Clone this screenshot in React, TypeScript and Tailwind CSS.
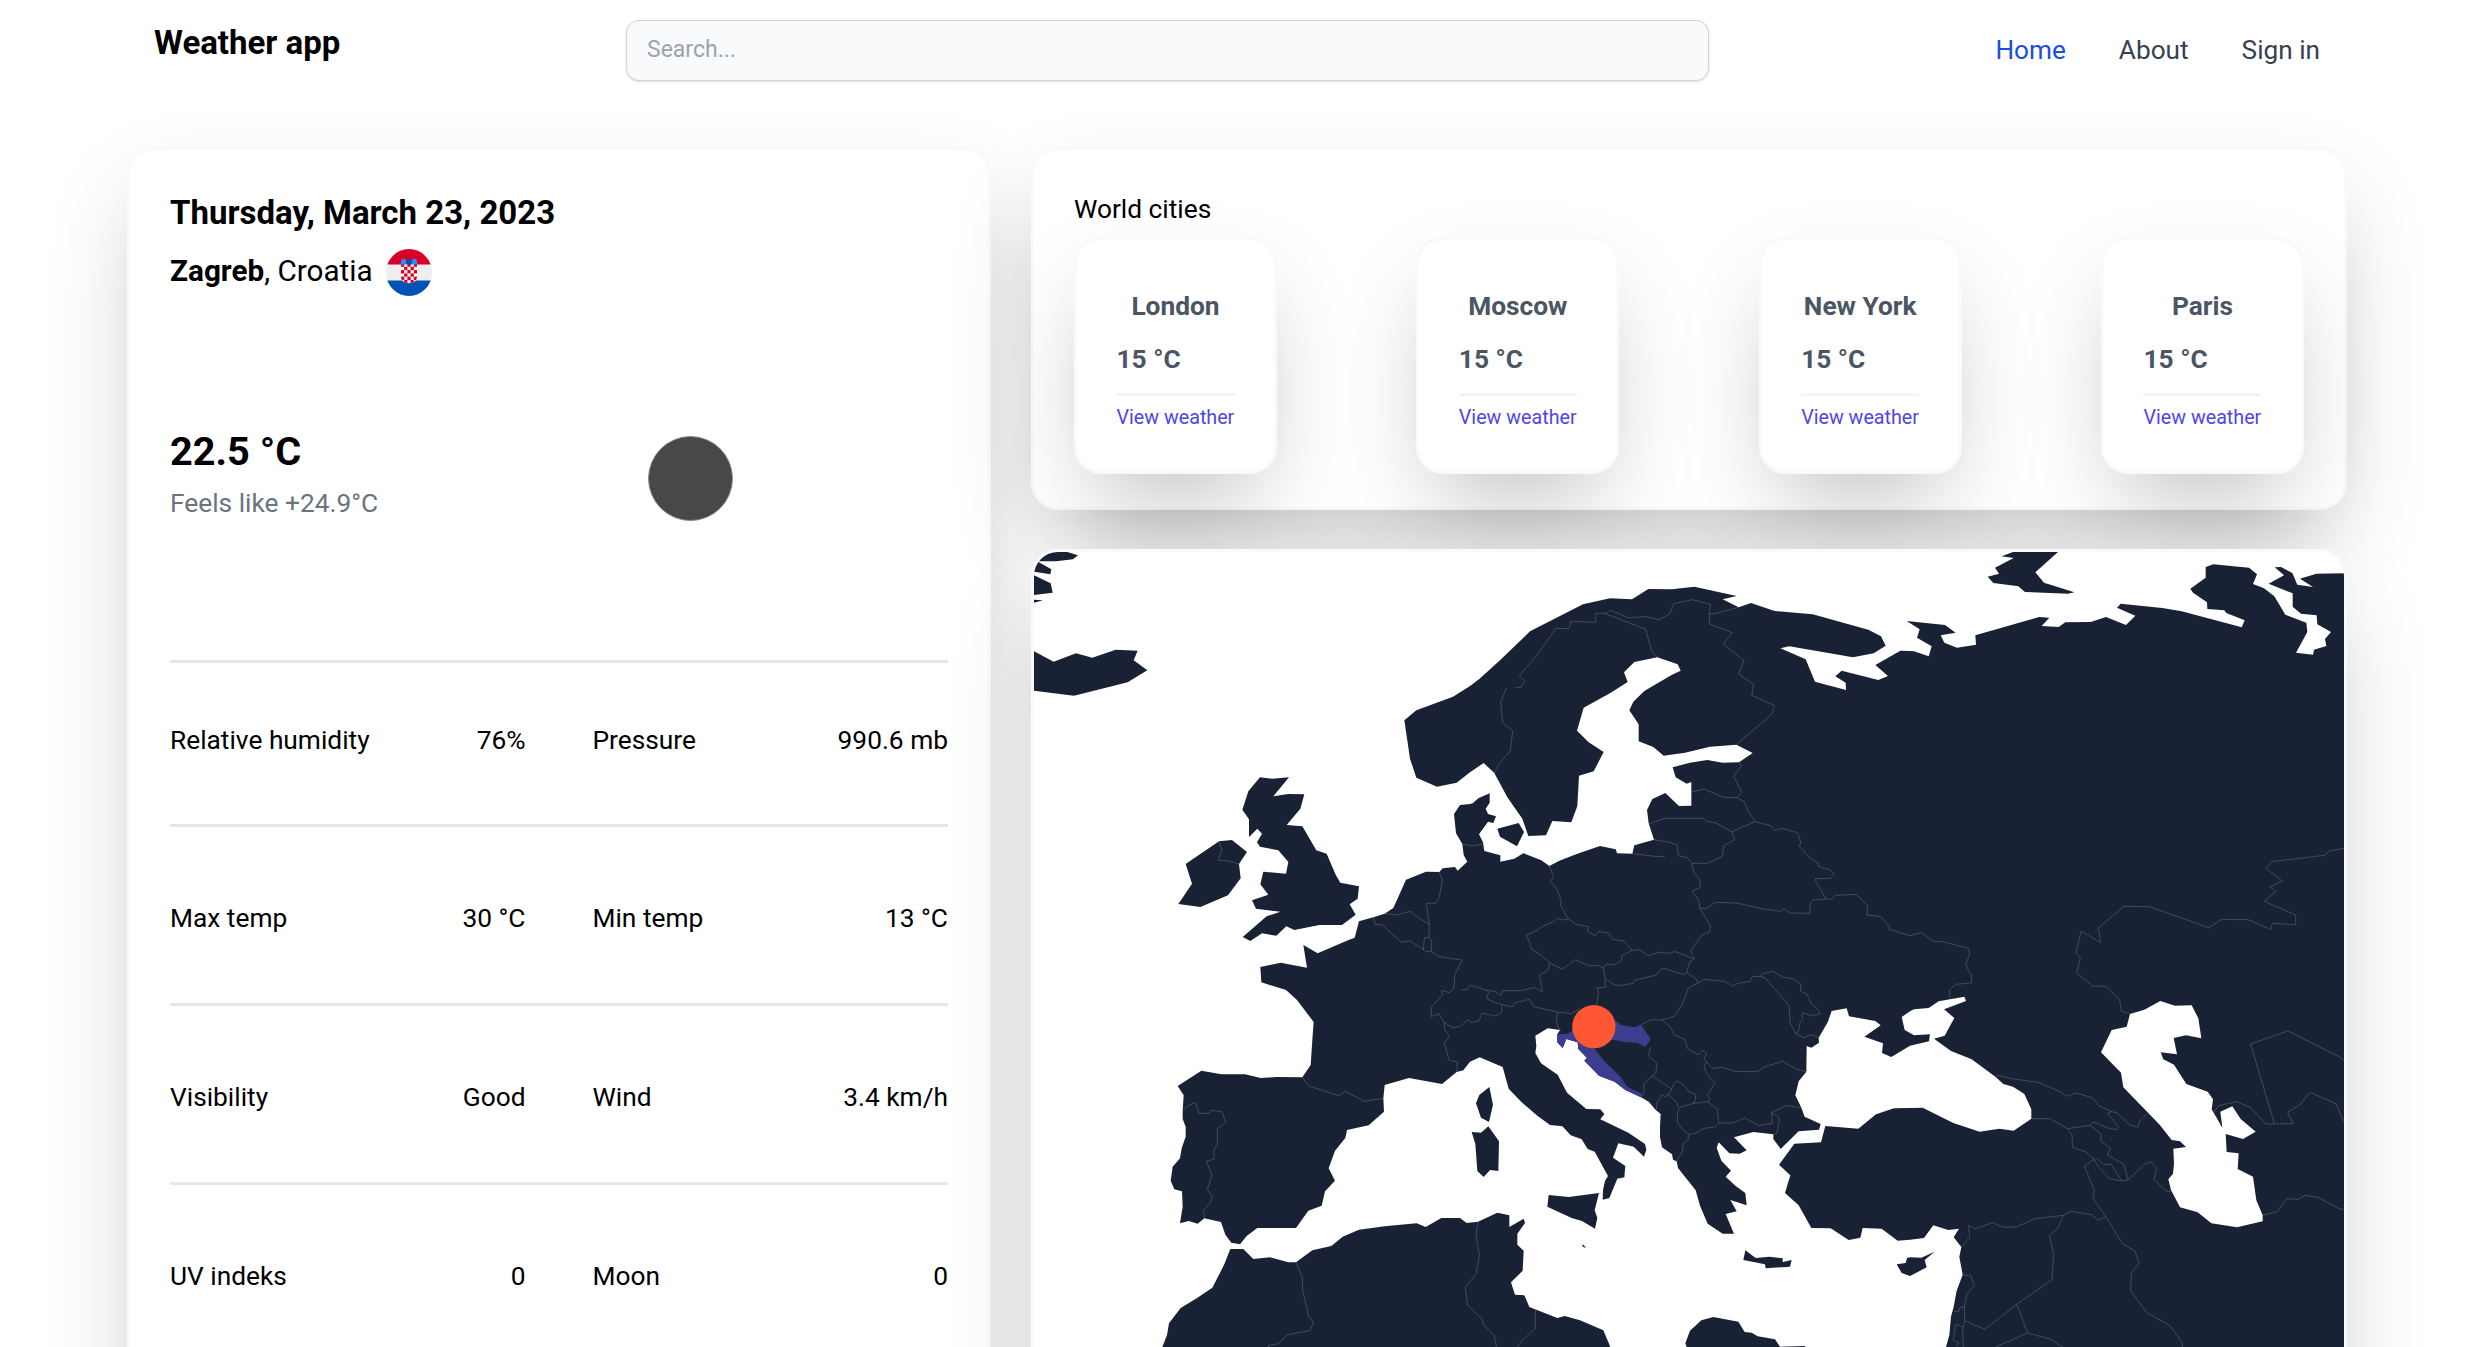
import React from "react";

/* ---------- map geometry ---------- */

// The map is stored as six sheets; each sheet has its own local origin.
const sheet = (dx: number, dy: number) => (points: string) =>
  points
    .trim()
    .split(/\s+/)
    .map((pair) => {
      const [x, y] = pair.split(",").map(Number);
      return `${x + dx},${y + dy}`;
    })
    .join(" ");

const A = sheet(0, 0);
const B = sheet(1320, 0);
const C = sheet(2640, 0);
const D = sheet(0, 1200);
const E = sheet(1320, 1200);
const F = sheet(2640, 1200);
const join = (...parts: string[]) => parts.join(" ");

const eurasia = join(
  D("630,913 604,908 586,884 573,846 523,835 503,851 476,843 450,850 458,800 456,754 433,748 422,722 428,680 450,655 455,625 467,590 467,560 458,537 458,512 461,466 443,438 514,392 574,403 645,403 692,414 738,411 817,412 842,375 847,300 851,246 801,180 768,150 694,127 691,81 752,68 831,83 820,15 863,40 954,1"),
  A("974,1193 987,1144 1030,1132 1064,1121 1090,1104 1128,1019 1188,995 1228,996 1238,985 1275,981 1283,992 1312,965 1301,945 1297,912 1278,880 1272,822 1290,795 1320,792"),
  B("8,790 25,775 59,760 59,788 47,806 54,822 78,829 70,849 54,845 27,883 39,907 43,933 91,946 91,965 133,956 160,940 214,961 238,978 268,962 320,942 390,918 437,928 441,940 487,941 493,916 552,899 536,850 531,810 547,777 586,759 627,798 664,797 664,726 650,731 617,712 608,682 660,668 712,660 758,668 807,667 848,639 799,614 720,620 645,638 581,647 550,621 506,604 506,553 478,511 490,485 523,453 606,404 632,392 623,373 562,352 493,366 462,397 473,426 421,459 341,503 321,572 356,607 401,636 371,694 327,707 322,798 304,847 247,843 228,886 175,888 157,836 112,772 73,699 41,669 0,697"),
  A("1280,728 1221,740 1159,713 1140,656 1123,541 1159,511 1269,470 1320,438"),
  B("27,418 90,361 180,274 339,193 420,175 486,178 535,147 606,148 673,140 800,168 758,178 806,202 843,189 914,213 1028,223 1195,269 1233,289 1247,317 1211,340 1149,352 958,319 931,325 1007,358 1035,425 1128,450 1127,428 1096,409 1115,392 1225,420 1254,408 1216,375 1291,332 1320,333"),
  C("12,334 56,349 65,319 21,293 29,268 -10,243 105,255 137,278 92,286 103,308 141,323 198,314 196,286 388,231 418,233 395,258 446,261 466,247 542,246 588,231 648,255 676,227 621,203 632,191 757,204 815,214 995,262 1004,241 949,219 943,211 892,207 891,187 849,158 841,146 887,113 887,81 910,73 1017,83 1041,103 1029,132 1062,145 1093,169 1126,224 1189,248 1192,276 1158,338 1209,344 1212,329 1249,318 1245,297 1263,276 1222,253 1220,226 1173,221 1148,200 1148,160 1076,131 1122,106 1094,82 1113,81 1147,99 1162,134 1209,141 1170,116 1219,101 1330,99"),
  F("1330,1300 95,1300 108,1221 118,1185 123,1130 131,1100 140,1052 158,1004 148,951 154,921 131,892 147,866 115,870 70,856 42,894 0,899"),
  E("1283,902 1235,866 1178,864 1171,893 1136,900 1082,865 1024,864 986,796 945,759 961,706 927,674 973,611 1053,607 1066,558 1165,566 1218,523 1272,505 1320,504"),
  F("38,503 130,549 209,575 268,566 311,572 364,536 364,508 343,462 309,440 280,432 256,410 185,358 123,333 72,296 104,287 133,234 102,208 168,183 163,170 86,184 56,204 12,208 0,214"),
  E("1295,231 1304,270 1320,279"),
  F("12,286 60,283 57,304 0,317"),
  E("1264,351 1236,339 1239,310 1183,290 1232,256 1216,243 1137,229 1130,205 1085,213 1073,247 1046,293 1047,308 1024,323 1010,318 1009,395 986,424 976,466 994,503 1004,530 1052,552 1047,569 986,574 932,627 910,597 910,583 850,576 792,592 830,631 809,641 778,640 746,607 740,623 754,662 783,692 767,710 797,738 826,759 830,796 781,780 800,814 767,822 792,881 758,881 713,851 690,797 677,751 624,684 620,664 609,659 606,643 576,622 570,590 570,560 572,522 555,508 537,486 516,473 466,450 434,425 387,407 343,362 351,354 325,327 323,307 289,297 278,324 262,307 262,283 270,270 233,265 196,287 199,318 196,339 213,370 263,404 291,458 349,507 391,508 403,522 391,538 475,578 525,612 529,629 522,650 491,620 445,610 429,653 466,678 463,712 442,716 418,774 398,779 399,750 405,723 414,708 374,635 353,627 335,598 302,586 277,559 240,555 202,527 155,487 116,446 98,381 29,352 0,365"),
  D("1300,391 1280,396 1236,432 1137,414 1064,435 1060,475 1062,515 1016,556 951,570 946,594 915,632 896,685 915,722 885,754 875,797 835,812 798,864 682,864 650,888"),
);

const africa = join(
  D("375,1300 397,1221 411,1185 417,1150 452,1104 500,1075 547,1043 582,975 601,927 640,927 670,957 720,952 775,967 798,967 847,931 904,918 938,890 987,869 1064,859 1160,850 1187,861 1234,834 1290,834 1310,849"),
  E("24,845 82,818 118,826 118,861 161,836 165,849 142,881 142,914 161,932 158,992 123,1027 135,1064 163,1066 178,1101 262,1134 284,1128 330,1141 400,1171 421,1221 440,1300"),
);

const land = [
  eurasia,
  africa,
  E("680,1300 650,1221 646,1210 660,1172 694,1141 730,1131 805,1145 824,1176 845,1178 863,1189 915,1198 930,1220 1005,1218 1010,1300"),
  // Iceland and Greenland
  A("0,328 12,334 71,365 138,340 187,353 257,329 323,332 311,361 352,391 293,427 132,467 12,452 0,451"),
  A("10,64 10,20 60,30 112,36 144,46 129,58 78,64"),
  A("27,67 64,88 61,103 12,95 0,93 0,60"),
  A("0,100 12,106 62,130 68,158 12,165 0,166"),
  A("0,179 39,181 0,191"),
  // Great Britain, Ireland, Zealand
  A("690,712 727,716 777,712 730,769 775,762 823,763 811,806 770,855 817,859 859,931 890,941 917,1004 931,1028 987,1039 983,1076 959,1093 977,1124 936,1155 868,1155 793,1170 769,1159 739,1187 696,1180 661,1203 638,1191 710,1129 751,1115 678,1106 666,1081 715,1064 691,1033 700,995 768,1001 775,966 745,931 690,920 681,907 696,881 682,866 657,891 657,838 637,809 655,754"),
  A("567,904 606,900 651,936 627,972 632,1015 594,1066 511,1101 445,1092 486,1031 467,972"),
  B("82,866 146,849 162,876 141,919 90,890"),
  // Mediterranean islands
  E("58,441 69,494 57,546 33,533 18,490 28,465"),
  E("5,576 33,578 55,559 87,604 85,693 60,690 41,711 22,693 16,612"),
  E("236,765 296,771 387,759 374,811 382,834 375,866 336,843 305,834 232,800"),
  E("337,912 349,923 338,920"),
  E("826,931 857,954 898,950 938,955 938,966 965,960 960,980 887,985 885,973 820,960"),
  join(E("1311,954 1307,969 1280,973 1295,999 1320,1008"), F("50,982 44,960 74,935 34,953 0,952")),
  // Novaya Zemlya
  C("309,36 275,49 311,54 255,83 267,101 233,110 250,129 325,139 345,156 475,161 493,157 402,128 376,97 444,36"),
];

const caspian = F(
  "751,183 795,197 845,196 865,235 874,295 828,286 791,294 801,343 752,337 760,358 792,374 829,432 893,455 909,478 905,508 937,563 931,515 967,499 992,537 1037,575 999,597 947,582 950,636 986,640 983,687 1029,710 1039,781 1058,826 1058,844 981,862 904,850 863,817 810,802 783,750 775,718 789,701 792,670 790,626 828,621 810,604 785,600 749,554 640,442 633,398 573,337 605,270 650,260 660,222 703,209",
);

const croatia = E(
  "430,232 437,242 453,255 494,262 513,254 542,297 527,320 501,308 468,307 428,299 360,310 371,324 402,362 452,412 472,440 517,463 516,473 466,450 434,425 387,407 343,362 351,354 325,327 323,307 289,297 278,324 262,307 262,283 290,282 308,272 340,240",
);

const borders = [
  // Western Europe
  A("567,904 575,930 565,961 594,962 627,972"),
  join(A("1297,912 1320,917"), B("12,917 39,912")),
  A("1228,996 1237,1019 1228,1071 1217,1090 1189,1090 1198,1152 1197,1192"),
  A("1064,1121 1101,1125 1140,1114 1172,1138 1198,1152"),
  A("1030,1132 1036,1154 1056,1154 1115,1207 1139,1202 1190,1235"),
  A("1180,1230 1183,1194 1197,1192 1205,1205 1204,1234"),
  D("1190,35 1204,34 1226,50 1297,60 1275,103 1271,146 1258,158 1234,151 1237,165 1204,201 1204,230 1226,221 1243,248 1268,263 1290,260 1316,238"),
  D("1243,248 1244,268 1258,291 1243,309 1257,360 1282,366 1280,396"),
  join(D("1293,149 1311,149 1320,135"), E("50,151")),
  join(D("1316,238"), E("0,247 26,244 36,220 76,228 95,218 95,194")),
  D("817,412 836,438 927,467 946,454 1003,484 1060,475"),
  D("458,512 475,496 496,488 507,520 537,520 545,511 576,515 587,547 562,567 562,615 553,626 551,658 529,664 546,705 532,749 548,770 539,790 521,811 523,835"),
  // North Africa
  D("798,967 817,1013 818,1050 836,1130 851,1146 839,1172 772,1184 745,1211 716,1216 714,1225"),
  join(E("24,845 18,885 28,945 19,1001 0,1025"), D("1306,1043 1312,1094 1320,1103"), E("37,1137 39,1153 73,1186 80,1225")),
  E("196,1110 196,1165 158,1200 138,1225"),
  // Nordics and Baltics
  B("73,699 88,670 121,633 128,574 98,548 92,485 110,444"),
  B("136,442 153,442 164,424 148,407 200,347 257,266 297,265 303,244 377,247 377,220 404,220 423,211 473,233 527,230 568,239 600,221 611,191 668,179 722,193 717,221 735,221 806,202"),
  B("404,220 527,268 545,333 562,352"),
  B("717,221 719,252 786,278 760,312 822,361 806,402 851,433 845,466 914,497 905,523 799,614"),
  B("807,667 815,677 791,708 815,757 800,773 823,785 836,816 855,845"),
  B("664,756 703,747 760,772 800,773"),
  B("536,852 582,835 701,835 711,845 735,848 786,875 855,845 904,858 913,871 934,865 982,878 992,906 988,919 1024,957 1045,969 1047,980 1079,989 1093,1003 1082,1015 1037,1016 1036,1022 1068,1077"),
  B("786,875 794,899 761,917 757,949 712,970 665,970 652,953 625,947 622,916 603,908 552,899"),
  B("487,941 555,949 585,950"),
  // Central and Eastern Europe
  join(B("665,970 671,997 689,1018 691,1042 667,1053 685,1079 690,1105 722,1160 718,1176 697,1184 684,1200"), E("662,34 674,56 659,65 650,97")),
  join(
    B("690,1105 710,1105 735,1087 800,1089 870,1105 930,1114 943,1106 959,1119 1020,1120 1020,1092 1030,1080 1068,1077 1085,1078 1097,1066 1159,1063 1193,1098 1191,1125 1232,1130 1257,1159 1257,1168 1320,1187"),
    C("35,1178 69,1204 98,1205 175,1225"),
    F("179,42 167,75 185,108 184,129 137,133 118,151 120,177"),
  ),
  B("238,978 251,1009 241,1025 260,1047 273,1079 272,1096 295,1137 318,1153 355,1160 352,1174 376,1187 386,1174 417,1180 428,1198 461,1203 487,1231"),
  B("295,1137 274,1140 262,1135 248,1147 217,1159 201,1171 169,1186 178,1205 185,1228 212,1245 240,1269"),
  E("240,69 277,88 316,59 357,77 385,76 401,85 405,115 429,132 448,137 490,130 493,121 560,105 572,88 582,85 640,104 650,97 680,118 683,130"),
  E("240,69 233,91 209,106 217,155 194,143 150,152 97,152 92,166 75,154 50,151 57,157 49,175 67,184 95,194 129,200 133,189 178,178 191,200 262,216 305,221 330,205"),
  E("401,85 407,73 437,73 455,60 456,46 487,31 508,29 535,47 566,37 603,40 613,34 670,56"),
  E("405,115 407,142 380,143 386,156 380,195"),
  E("683,130 656,143 638,190 614,228 577,240 545,239 513,254"),
  E("683,130 702,118 765,124 788,139 804,130 841,124 847,110 870,109 885,113 957,196 961,250 977,280 1000,293 1024,284 1046,293"),
  E("870,109 876,102 908,94 940,112 971,117 992,132 992,154 1011,163 1023,189 1041,205 1051,221 1028,227 1000,219 996,227 999,238 989,250 986,273 977,280"),
  E("262,216 259,250 272,274"),
  // Balkans
  E("577,240 600,260 614,285 645,298 652,325 685,345 698,331 710,340 702,357 727,385 758,382 795,394 863,395 885,380 938,364 979,388 1009,395"),
  E("710,365 702,378 709,400 735,428 713,465 720,480 713,485"),
  E("541,321 536,348 560,370 558,398 546,407 522,432 521,465"),
  E("546,407 605,447 612,430 622,423 641,436 656,454 677,463 676,478 671,490"),
  E("605,447 596,465 622,490 625,503"),
  E("560,508 560,490 577,463 583,470 596,465"),
  E("632,501 671,490 713,485 742,507 746,549 735,561 702,565 675,580 655,583 635,565 622,546 623,516 632,501"),
  E("655,583 655,598 640,610 637,635 620,664"),
  E("746,549 787,549 824,534 865,557 906,550 905,517 950,497 994,503"),
  E("905,517 929,535 921,580 910,583"),
  // Caucasus and Middle East
  F("256,410 262,406 311,417 384,427 457,458 468,469 500,459 546,473 566,497 605,515 593,521 625,560 620,569 598,565 549,546 540,556 473,566 419,536 364,536"),
  F("605,515 620,518 660,556 685,561 689,543 711,521"),
  F("540,556 574,583 572,602 602,625 592,645 642,673 654,720 635,723 598,715 565,680 553,658"),
  F("473,566 486,587 488,622 527,636 553,658 523,678 553,752 549,775 588,831 638,912 675,933 687,971 665,997 661,1052 710,1117 780,1157 817,1208 817,1225"),
  F("560,656 581,673 604,673 635,723"),
  F("654,720 705,671 723,666 740,684 732,719 767,752 783,755"),
  F("154,921 179,891 176,856 195,867 248,848 279,862 320,861 374,836 460,826 482,814 544,824 565,841 588,831"),
  F("460,826 443,866 418,886 431,940 426,1019 320,1093 225,1168 164,1142"),
  F("320,1093 353,1179 257,1221"),
  F("353,1179 420,1197 458,1221"),
  F("158,1006 182,1006 193,1037 170,1063 163,1100 164,1142 158,1170 160,1225"),
  F("131,1115 147,1114 148,1104 163,1100"),
  F("158,1161 137,1153 130,1200 146,1208 140,1218"),
  // Central Asia
  join(
    C("1310,924 1257,933 1244,946 1084,965 1069,985 1118,1024 1081,1040 1097,1055 1063,1084 1157,1125 1157,1154 1087,1150 1082,1168 1014,1139 936,1138 896,1163 718,1100 641,1099 565,1164 572,1208 513,1174 507,1200"),
    F("497,40 511,52 500,99 548,138 588,139 629,181 634,213 660,222"),
  ),
  F("909,520 926,497 980,485 1021,502 1068,552 1150,551 1133,517 1169,495 1200,457 1278,491 1302,547"),
  F("1093,551 1022,312 1134,273 1287,350 1310,366"),
  F("1058,826 1102,815 1130,776 1164,778 1185,766 1224,772 1287,806 1310,810"),
];

function EuropeMap() {
  return (
    <svg className="block h-[900px] w-[1310px]" viewBox="12 36 3930 2700" aria-label="Map of Europe">
      <g fill="#192135">
        {land.map((points, i) => (
          <polygon key={i} points={points} />
        ))}
      </g>
      <polygon points={caspian} fill="#ffffff" />
      <g fill="none" stroke="#8f95a3" strokeOpacity="0.7" strokeWidth="1.5">
        {borders.map((points, i) => (
          <polyline key={i} points={points} />
        ))}
      </g>
      <polygon points={croatia} fill="#3c3d8f" />
      <circle cx={1691.5} cy={1460} r={65} fill="#ff5733" />
    </svg>
  );
}

function CroatiaFlag() {
  const cells: React.ReactNode[] = [];
  for (let r = 0; r < 6; r++) {
    for (let c = 0; c < 5; c++) {
      if ((r + c) % 2 === 0) {
        cells.push(<rect key={`${r}-${c}`} x={c * 3.2} y={r * 3.3} width={3.2} height={3.3} fill="#d80027" />);
      }
    }
  }
  return (
    <svg className="h-[47px] w-[46px]" viewBox="0 0 46 47" aria-label="Croatia">
      <defs>
        <clipPath id="flag-disc">
          <ellipse cx="23" cy="23.5" rx="23" ry="23.5" />
        </clipPath>
        <clipPath id="flag-shield">
          <path d="M0 0H16V13C16 17.500 12 20 8 20S0 17.500 0 13Z" />
        </clipPath>
      </defs>
      <g clipPath="url(#flag-disc)">
        <rect width="46" height="47" fill="#eeeeee" />
        <rect width="46" height="15.500" fill="#d80027" />
        <rect y="31.500" width="46" height="15.500" fill="#0052b4" />
        <g transform="translate(15 14.500)">
          <g clipPath="url(#flag-shield)">
            <rect width="16" height="20" fill="#f5f5f5" />
            {cells}
          </g>
        </g>
        <path d="M15 15.500V11L17.700 9.500L20.300 11V15.500Z" fill="#338af3" />
        <path d="M25.700 15.500V11L28.300 9.500L31 11V15.500Z" fill="#338af3" />
        <path d="M20.300 15.500V11L23 9.500L25.700 11V15.500Z" fill="#0052b4" />
      </g>
    </svg>
  );
}

/* ---------- page pieces ---------- */

function Header() {
  return (
    <header className="flex h-[147px] items-start pl-[154px] pr-[159px]">
      <h1 className="mt-[20px] w-[472px] text-[33px] leading-[46px] font-bold">Weather app</h1>
      <input
        className="mt-[20px] h-[61px] w-[1083px] rounded-[13px] border border-[#d1d5db] bg-[#f9fafb] px-5 pb-[2px] text-[23px] shadow-sm placeholder:text-[#9ca3af]"
        placeholder="Search..."
      />
      <nav className="mt-[30px] ml-auto flex gap-[53px] text-[26.2px] leading-[40px] text-[#374151]">
        <a className="text-[#1d4ed8]">Home</a>
        <a>About</a>
        <a>Sign in</a>
      </nav>
    </header>
  );
}

const stats = [
  [["Relative humidity", "76%"], ["Pressure", "990.6 mb"]],
  [["Max temp", "30 °C"], ["Min temp", "13 °C"]],
  [["Visibility", "Good"], ["Wind", "3.4 km/h"]],
  [["UV indeks", "0"], ["Moon", "0"]],
];

const cardClass =
  "rounded-[27px] border-3 border-[#f9fafb] bg-white shadow-[0_41.67px_95px_-20px_rgba(0,0,0,0.25)]";

function CurrentWeather() {
  return (
    <section className={`${cardClass} h-[1400px] w-[864px] px-10 pt-10`}>
      <h2 className="text-[33px] leading-[46px] font-bold">Thursday, March 23, 2023</h2>
      <div className="mt-[13px] flex h-[47px] items-center gap-[13px] text-[29.7px]">
        <p className="pb-[2px]">
          <b>Zagreb</b>, Croatia
        </p>
        <CroatiaFlag />
      </div>
      <div className="mt-[130px] grid h-[106px] grid-cols-2">
        <div>
          <p className="mt-px text-[39.7px] leading-[50px] font-bold">22.5 °C</p>
          <p className="mt-[6px] text-[26.3px] leading-[40px] text-[#6b7280]">Feels like +24.9°C</p>
        </div>
        <div className="pt-[10px] pl-[89px]">
          <div className="size-[85px] rounded-full border border-[#8a8a8b] bg-[#48484a]" />
        </div>
      </div>
      <div className="mt-[128px] flex flex-col">
        {stats.map((row, i) => (
          <div
            key={row[0][0]}
            className={`grid grid-cols-2 gap-x-[67px] border-t-3 border-[#e5e7eb] text-[26.3px] leading-[40px] ${
              i === 0 ? "h-[164px] pt-[57px]" : "h-[179px] pt-[71px]"
            }`}
          >
            {row.map(([label, value]) => (
              <div key={label} className="flex h-10 justify-between">
                <span>{label}</span>
                <span>{value}</span>
              </div>
            ))}
          </div>
        ))}
      </div>
    </section>
  );
}

function WorldCities() {
  return (
    <section className={`${cardClass} h-[363px] px-10 pt-[39px]`}>
      <h3 className="text-[26.3px] leading-[40px]">World cities</h3>
      <div className="mt-[8px] flex justify-between">
        {["London", "Moscow", "New York", "Paris"].map((city) => (
          <article key={city} className={`${cardClass} flex h-[237px] w-[203px] flex-col px-[39.5px] pt-[46px] text-[#4b5563]`}>
            <h4 className="text-center text-[26.3px] leading-[40px] font-bold">{city}</h4>
            <p className="mt-[13px] text-[26.3px] leading-[40px] font-bold">15 °C</p>
            <a className="mt-[14px] border-t-3 border-[#f3f4f6] pt-[8px] text-[19.7px] leading-[27px] whitespace-nowrap text-[#4f46e5]">
              View weather
            </a>
          </article>
        ))}
      </div>
    </section>
  );
}

export default function App() {
  return (
    <div className="h-[1347px] w-full overflow-hidden bg-white font-['Roboto',sans-serif] text-black">
      <Header />
      <main className="flex gap-10 pl-[127px]">
        <CurrentWeather />
        <div className="flex w-[1316px] flex-col gap-[39px]">
          <WorldCities />
          <section className={`${cardClass} overflow-hidden`}>
            <EuropeMap />
          </section>
        </div>
      </main>
    </div>
  );
}
